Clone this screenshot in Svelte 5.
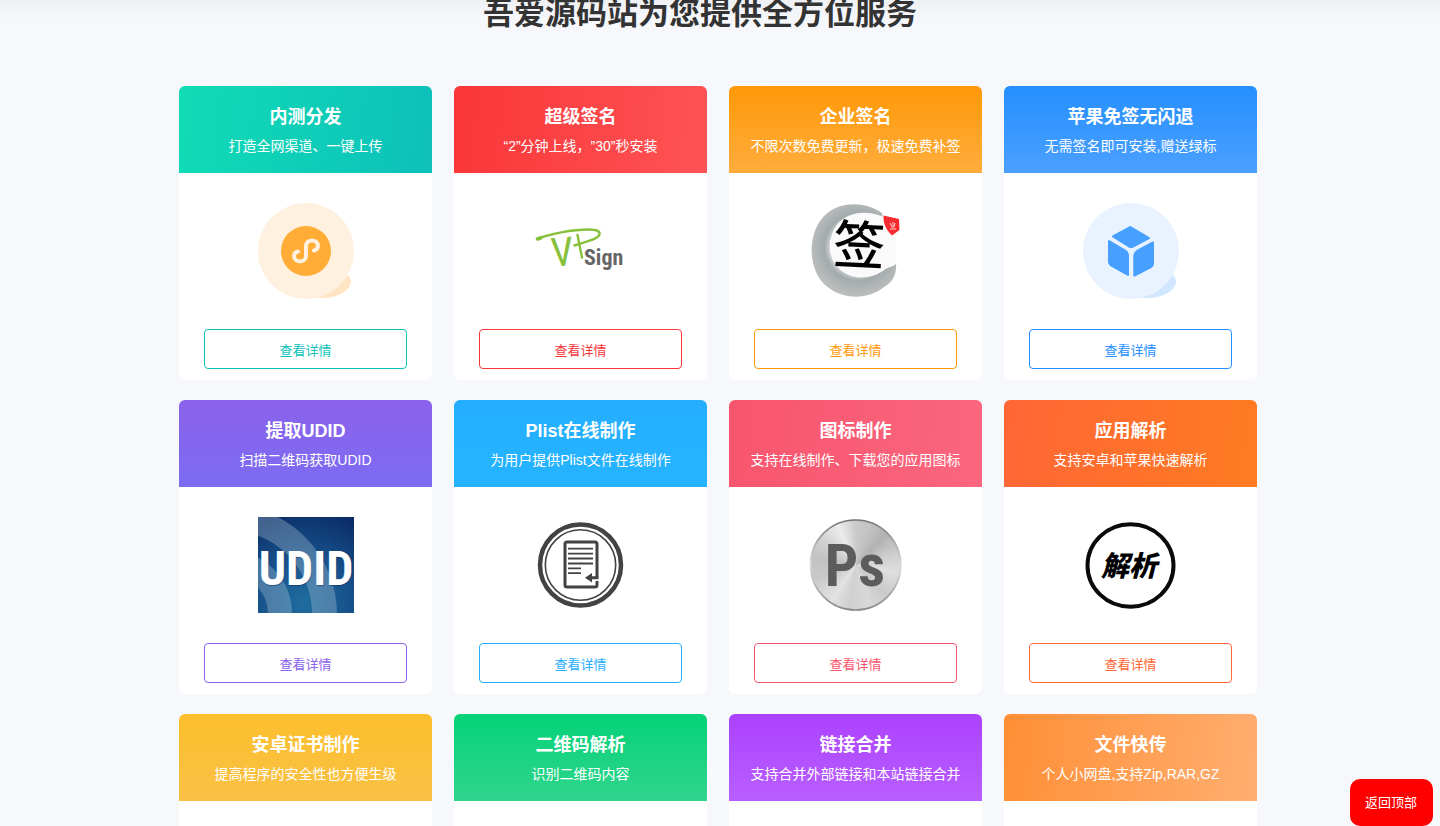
<script>
  const services = [
    { title: '内测分发', desc: '打造全网渠道、一键上传', icon: 'mini', color: '#0dc1b9', bg: 'linear-gradient(97deg, #10dcb5, #0dc0ba)' },
    { title: '超级签名', desc: '“2”分钟上线，”30”秒安装', icon: 'sign', color: '#f93638', bg: 'linear-gradient(97deg, #f93638, #ff5355)' },
    { title: '企业签名', desc: '不限次数免费更新，极速免费补签', icon: 'brush', color: '#ff9807', bg: 'linear-gradient(#ff9807, #ffad3d)' },
    { title: '苹果免签无闪退', desc: '无需签名即可安装,赠送绿标', icon: 'cube', color: '#258fff', bg: 'linear-gradient(#258fff, #4ba0ff)' },
    { title: '提取UDID', desc: '扫描二维码获取UDID', icon: 'udid', color: '#8a62eb', bg: 'linear-gradient(#8c62eb, #7b6cf2)' },
    { title: 'Plist在线制作', desc: '为用户提供Plist文件在线制作', icon: 'doc', color: '#25aeff', bg: 'linear-gradient(#25aeff, #25b4ff)' },
    { title: '图标制作', desc: '支持在线制作、下载您的应用图标', icon: 'ps', color: '#f7556d', bg: 'linear-gradient(97deg, #f7556d, #fb667f)' },
    { title: '应用解析', desc: '支持安卓和苹果快速解析', icon: 'parse', color: '#ff6635', bg: 'linear-gradient(97deg, #ff6635, #ff7b22)' },
    { title: '安卓证书制作', desc: '提高程序的安全性也方便生级', bg: 'linear-gradient(#fdbf2d, #f9c045)' },
    { title: '二维码解析', desc: '识别二维码内容', bg: 'linear-gradient(#05d277, #30d58d)' },
    { title: '链接合并', desc: '支持合并外部链接和本站链接合并', bg: 'linear-gradient(#ac42ff, #b85eff)' },
    { title: '文件快传', desc: '个人小网盘,支持Zip,RAR,GZ', bg: 'linear-gradient(97deg, #ff8f36, #ffae70)' }
  ];
</script>

<main class="page" lang="zh-CN">
  <section class="services">
    <h2>吾爱源码站为您提供全方位服务</h2>
    <div class="grid">
      {#each services as s}
        <article class="card">
          <header style:background={s.bg}>
            <h3>{s.title}</h3>
            <p>{s.desc}</p>
          </header>
          {#if s.icon}
            <div class="body">
              <div class="art">{@render art(s.icon)}</div>
              <button type="button" style:color={s.color}>查看详情</button>
            </div>
          {/if}
        </article>
      {/each}
    </div>
  </section>
  <button type="button" class="top">返回顶部</button>
</main>

{#snippet art(name)}
  {#if name === 'mini'}
    <svg viewBox="0 0 96 96" aria-hidden="true">
      <path d="M58 95C78 96 92 89 93 79C93 76 92 74 90 72L70 80Z" fill="#ffe5c4" />
      <circle cx="48" cy="48" r="48" fill="#fff1e0" />
      <circle cx="48" cy="48" r="25" fill="#ffad37" />
      <path d="M56 47.5C58.5 46.8 60 45 60 43C60 39.9 57.3 37.5 54 37.5C50.7 37.5 48 39.9 48 43V53C48 56 45.3 58.5 42 58.5C38.7 58.5 36 56 36 53C36 51 37.5 49.2 40 48.5" fill="none" stroke="#fff1e0" stroke-width="4" stroke-linecap="round" />
    </svg>
  {:else if name === 'sign'}
    <svg viewBox="0 0 96 96" aria-hidden="true">
      <g fill="none" stroke="#86c13c" stroke-width="2.4" stroke-linecap="round" stroke-linejoin="round">
        <path d="M5 35.6C16 31 39 26.5 56 26.5C64 26.5 67.5 28.5 66.5 31.5C65 36.5 51 39 41.5 42.5" />
        <path d="M44.5 32L49 54.5" />
        <path d="M4.5 36L8 34.8" stroke-width="3.6" />
      </g>
      <text x="18" y="63" class="narrow" font-size="40" fill="#86c13c" transform="rotate(-5 28 50)">V</text>
      <text x="51" y="62" class="narrow" font-size="22" font-weight="700" fill="#666">Sign</text>
    </svg>
  {:else if name === 'brush'}
    <svg viewBox="0 0 96 96" aria-hidden="true">
      <defs>
        <radialGradient id="ink" cx="50" cy="44" r="54" gradientUnits="userSpaceOnUse">
          <stop offset=".5" stop-color="#d5d9da" />
          <stop offset=".62" stop-color="#a3abad" />
          <stop offset=".8" stop-color="#b3b7b7" />
          <stop offset="1" stop-color="#c4c4c2" />
        </radialGradient>
      </defs>
      <path d="M74 10C57-2 31-2 16 13C-1 31 0 65 16 81C34 98 60 97 76 84C85 79 89 72 88 58L78 40Z" fill="url(#ink)" />
      <path d="M76 14C58 6 38 9 28 23C17 40 21 59 35 69C48 78 66 75 76 67C80 64 85 64 88 61V22Z" fill="#fafafa" />
      <path d="M75.5 12.5L91 16L91.500 27L84 32.500C78 27 75 20 75.5 12.5Z" fill="#f72b2f" />
      <path d="M82 20l2 4m3-4l-1 4m-4 2h6m-3-7v6" stroke="#ffd4d2" stroke-width="1" />
      <text x="25" y="61" class="brush" font-size="52" font-weight="500" transform="rotate(3 50 44)">签</text>
    </svg>
  {:else if name === 'cube'}
    <svg viewBox="0 0 96 96" aria-hidden="true">
      <path d="M58 95C78 96 92 89 93 79C93 76 92 74 90 72L70 80Z" fill="#d0e7ff" />
      <circle cx="48" cy="48" r="48" fill="#e8f3ff" />
      <g fill="#47a0ff" stroke="#47a0ff" stroke-width="2" stroke-linejoin="round">
        <path d="M47.5 24L66 35L50 43.5Q48 44.5 46 43.5L30 33.5Z" />
        <path d="M26 38L43 48Q45 49.5 45 52V72L28 62.5Q26 61 26 59Z" />
        <path d="M70 39.5V61Q70 63 68 64L51.3 72.5V53Q51.3 50 54 48Z" />
      </g>
    </svg>
  {:else if name === 'udid'}
    <svg viewBox="0 0 96 96" aria-hidden="true">
      <defs>
        <radialGradient id="sea" cx="45" cy="85" r="96" gradientUnits="userSpaceOnUse">
          <stop offset="0" stop-color="#1f6c9f" />
          <stop offset=".5" stop-color="#17508a" />
          <stop offset="1" stop-color="#0a2c65" />
        </radialGradient>
      </defs>
      <rect width="96" height="96" fill="url(#sea)" />
      <g fill="none" stroke="#b6cedb" stroke-opacity=".32">
        <circle cx="-30" cy="97" r="96.5" stroke-width="25" />
        <circle cx="-30" cy="97" r="52" stroke-width="24" />
      </g>
      <text x="48.5" y="69" class="narrow" font-size="48" font-weight="700" text-anchor="middle" fill="#0a2c65" fill-opacity=".5">UDID</text>
      <text x="48" y="68" class="narrow" font-size="48" font-weight="700" text-anchor="middle" fill="#fff">UDID</text>
    </svg>
  {:else if name === 'doc'}
    <svg viewBox="0 0 96 96" aria-hidden="true">
      <g fill="none" stroke="#434343">
        <circle cx="47.5" cy="48" r="40.5" stroke-width="4.5" />
        <circle cx="47.5" cy="48" r="35.2" stroke-width="1.6" />
        <path d="M64 60V27Q64 25 62 25H34Q32 25 32 27V68Q32 70 34 70H62Q64 70 64 68V64" stroke-width="3" />
        <path d="M35 31.7H60M35 36.7H60M35 41.5H60M35 46.5H60M35 51.3H48M35 56.2H48" stroke-width="1.8" />
        <path d="M57 60.8H65.5" stroke-width="3" />
      </g>
      <path d="M52 60.8L59 56V65.5Z" fill="#434343" />
    </svg>
  {:else if name === 'ps'}
    <div class="disc">
      <svg viewBox="0 0 96 96" aria-hidden="true">
        <defs>
          <linearGradient id="rim" x1="0" y1="0" x2="0" y2="1">
            <stop offset="0" stop-color="#777" />
            <stop offset=".5" stop-color="#ddd" />
            <stop offset="1" stop-color="#888" />
          </linearGradient>
        </defs>
        <circle cx="47.5" cy="48" r="45" fill="none" stroke="url(#rim)" stroke-width="1.6" />
        <text x="47" y="69" class="narrow" font-size="59" font-weight="700" text-anchor="middle" fill="#5c5c5c">Ps</text>
      </svg>
    </div>
  {:else}
    <svg viewBox="0 0 96 96" aria-hidden="true">
      <ellipse cx="47.5" cy="48.5" rx="43" ry="41.2" fill="none" stroke="#0a0a0a" stroke-width="4" />
      <text x="46" y="59" class="brush" font-size="28" font-weight="900" font-style="italic" text-anchor="middle">解析</text>
    </svg>
  {/if}
{/snippet}

<style>
  :global(body) {
    margin: 0;
  }
  .page {
    height: 100vh;
    overflow: hidden;
    box-sizing: border-box;
    padding-right: 4px;
    background: linear-gradient(#eff0f4, #f7f8fc 20px);
    font-family: "Liberation Sans", "Noto Sans CJK SC", sans-serif;
    text-spacing-trim: space-all;
  }
  .services {
    max-width: 1078px;
    margin: 0 auto;
  }
  h2 {
    margin: 0 0 58px;
    padding-right: 36px;
    font-size: 31px;
    line-height: 28px;
    text-align: center;
    color: #333;
  }
  .grid {
    display: grid;
    grid-template-columns: repeat(4, 1fr);
    gap: 20px 22px;
  }
  .card {
    min-height: 294px;
    border-radius: 6px;
    background: #fff;
    overflow: hidden;
  }
  header {
    box-sizing: border-box;
    padding: 18px 0;
    height: 87px;
    color: #fff;
    text-align: center;
    white-space: nowrap;
  }
  h3 {
    margin: 0 0 5px;
    font-size: 18px;
    line-height: 27px;
  }
  p {
    margin: 0;
    font-size: 14px;
    line-height: 20px;
  }
  .body {
    display: flex;
    flex-direction: column;
    align-items: center;
    gap: 30px;
    padding: 30px 0 11px;
  }
  .art {
    width: 96px;
    height: 96px;
  }
  .art svg {
    display: block;
    width: 96px;
    height: 96px;
  }
  .disc {
    border-radius: 50%;
    background: radial-gradient(circle, transparent 45px, #fff 46px),
      conic-gradient(#cacaca, #c2c2c2 20deg, #b2b2b2 45deg, #cfcfcf 75deg, #dedede 100deg, #cacaca 135deg, #d8d8d8 160deg, #d0d0d0 190deg, #e2e2e2 215deg, #cacaca 250deg, #c2c2c2 280deg, #d4d4d4 310deg, #ececec 335deg, #cacaca);
  }
  .narrow {
    font-family: "Liberation Sans Narrow", "Roboto Condensed", "Open Sans Condensed", "DejaVu Sans Condensed", sans-serif;
  }
  .brush {
    font-family: "Noto Sans CJK SC", sans-serif;
  }
  button {
    font-family: inherit;
    font-size: 13px;
    cursor: pointer;
  }
  .body button {
    width: 80%;
    height: 40px;
    padding: 0;
    border: 1px solid currentColor;
    border-radius: 4px;
    background: #fff;
  }
  .top {
    position: fixed;
    right: 7px;
    bottom: 0;
    padding: 14px 16px 14px 15px;
    border: 0;
    border-radius: 10px;
    background: #f00;
    color: #fff;
    line-height: 19px;
  }
</style>
